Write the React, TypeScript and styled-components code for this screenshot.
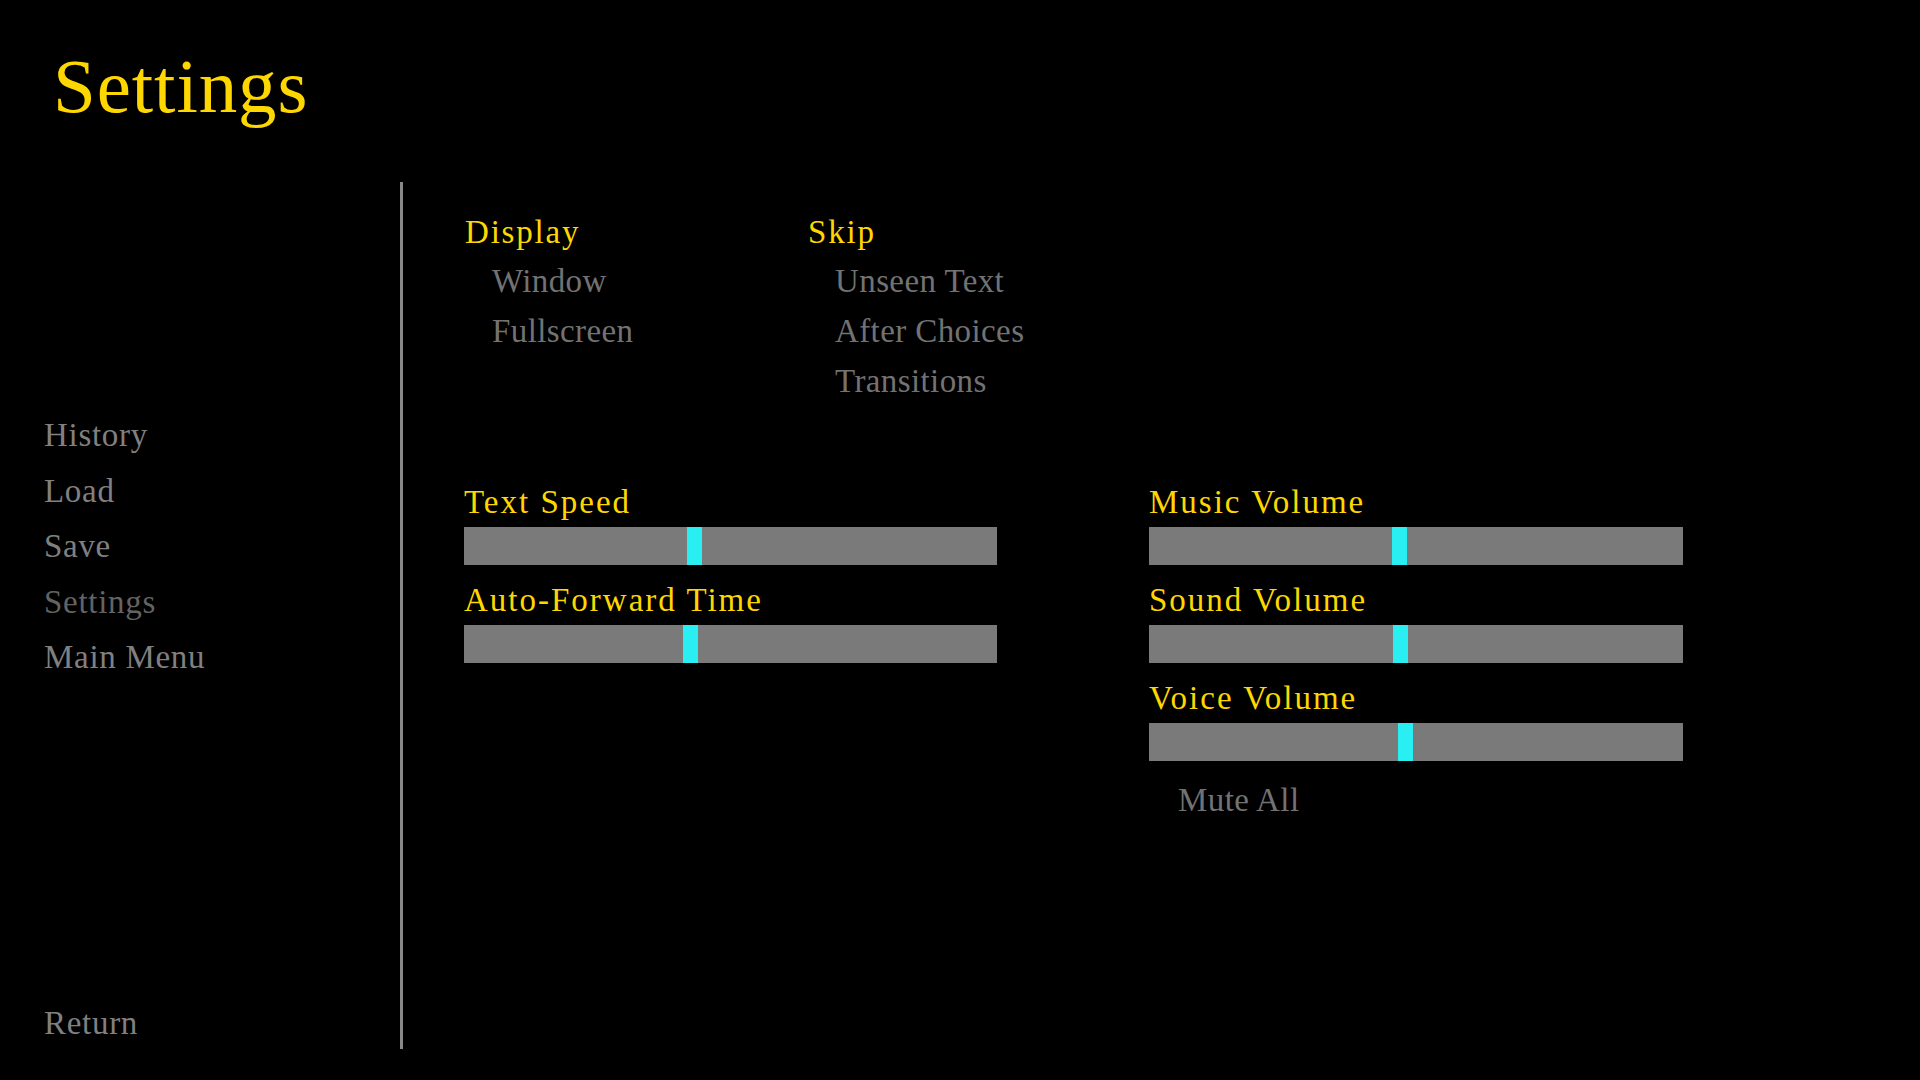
import * as React from 'react'
import styled, { createGlobalStyle } from 'styled-components'

const GlobalStyle = createGlobalStyle`
  html, body {
    margin: 0;
    padding: 0;
    background: #000;
  }
  body {
    font-family: "Liberation Serif", "Times New Roman", serif;
  }
`

const YELLOW = '#ffd700'
const HANDLE = 15

type SliderProps = { label: string; value: number }

const Slider = ({ label, value }: SliderProps) => (
  <SliderBlock>
    <SliderLabel>{label}</SliderLabel>
    <Bar>
      <Thumb style={{ left: `calc(${value} * (100% - ${HANDLE}px))` }} />
    </Bar>
  </SliderBlock>
)

export default function App() {
  return (
    <Screen>
      <GlobalStyle />
      <Title>Settings</Title>
      <Body>
        <Nav>
          <NavList>
            <NavItem>History</NavItem>
            <NavItem>Load</NavItem>
            <NavItem>Save</NavItem>
            <NavItem selected>Settings</NavItem>
            <NavItem>Main Menu</NavItem>
          </NavList>
          <ReturnItem>Return</ReturnItem>
        </Nav>
        <Divider />
        <Content>
          <Toggles>
            <Group width={343}>
              <GroupHeader>Display</GroupHeader>
              <Option>Window</Option>
              <Option>Fullscreen</Option>
            </Group>
            <Group>
              <GroupHeader>Skip</GroupHeader>
              <Option>Unseen Text</Option>
              <Option>After Choices</Option>
              <Option>Transitions</Option>
            </Group>
          </Toggles>
          <Sliders>
            <SliderColumn>
              <Slider label="Text Speed" value={0.43} />
              <Slider label="Auto-Forward Time" value={0.423} />
            </SliderColumn>
            <SliderColumn>
              <Slider label="Music Volume" value={0.469} />
              <Slider label="Sound Volume" value={0.471} />
              <Slider label="Voice Volume" value={0.479} />
              <MuteAll>Mute All</MuteAll>
            </SliderColumn>
          </Sliders>
        </Content>
      </Body>
    </Screen>
  )
}

const Screen = styled.div`
  width: 1920px;
  height: 1080px;
  background: #000;
  overflow: hidden;
  font-family: "Liberation Serif", "Times New Roman", serif;
`

const Title = styled.h1`
  margin: 0;
  padding: 48px 0 0 53px;
  font-size: 77px;
  line-height: 77px;
  font-weight: normal;
  letter-spacing: 0.9px;
  color: ${YELLOW};
`

const Body = styled.div`
  display: flex;
  height: 867px;
  margin-top: 57px;
`

const Nav = styled.nav`
  width: 400px;
  padding-left: 44px;
  box-sizing: border-box;
  display: flex;
  flex-direction: column;
`

const NavList = styled.div`
  display: flex;
  flex-direction: column;
  margin-top: 226px;
`

const NavItem = styled.div<{ selected?: boolean }>`
  font-size: 33px;
  line-height: 55.5px;
  letter-spacing: 0.7px;
  color: ${(p) => (p.selected ? '#636363' : '#808080')};
`

const ReturnItem = styled(NavItem)`
  margin-top: auto;
  margin-bottom: -2px;
`

const Divider = styled.div`
  width: 3px;
  background: #888;
`

const Content = styled.main`
  flex: 1;
  padding: 26px 0 0 61px;
`

const Toggles = styled.div`
  display: flex;
`

const Group = styled.div<{ width?: number }>`
  display: flex;
  flex-direction: column;
  width: ${(p) => (p.width ? `${p.width}px` : 'auto')};
`

const GroupHeader = styled.div`
  font-size: 33px;
  line-height: 48px;
  letter-spacing: 1.8px;
  color: ${YELLOW};
  padding-left: 1px;
`

const Option = styled.div`
  font-size: 33px;
  line-height: 50px;
  letter-spacing: 0.4px;
  color: #727272;
  padding-left: 28px;
`

const Sliders = styled.div`
  display: grid;
  grid-template-columns: 533px 534px;
  column-gap: 152px;
  align-items: start;
  margin-top: 72px;
`

const SliderColumn = styled.div`
  display: flex;
  flex-direction: column;
`

const SliderBlock = styled.div`
  display: flex;
  flex-direction: column;
  margin-bottom: 11px;
`

const SliderLabel = styled.div`
  font-size: 33px;
  line-height: 48px;
  letter-spacing: 2px;
  color: ${YELLOW};
`

const Bar = styled.div`
  position: relative;
  height: 38px;
  margin-top: 1px;
  background: #7a7a7a;
`

const Thumb = styled.div`
  position: absolute;
  top: 0;
  bottom: 0;
  width: ${HANDLE}px;
  background: #29eef2;
`

const MuteAll = styled.div`
  font-size: 33px;
  line-height: 50px;
  letter-spacing: 0.4px;
  color: #727272;
  padding-left: 29px;
  margin-top: 3px;
`
